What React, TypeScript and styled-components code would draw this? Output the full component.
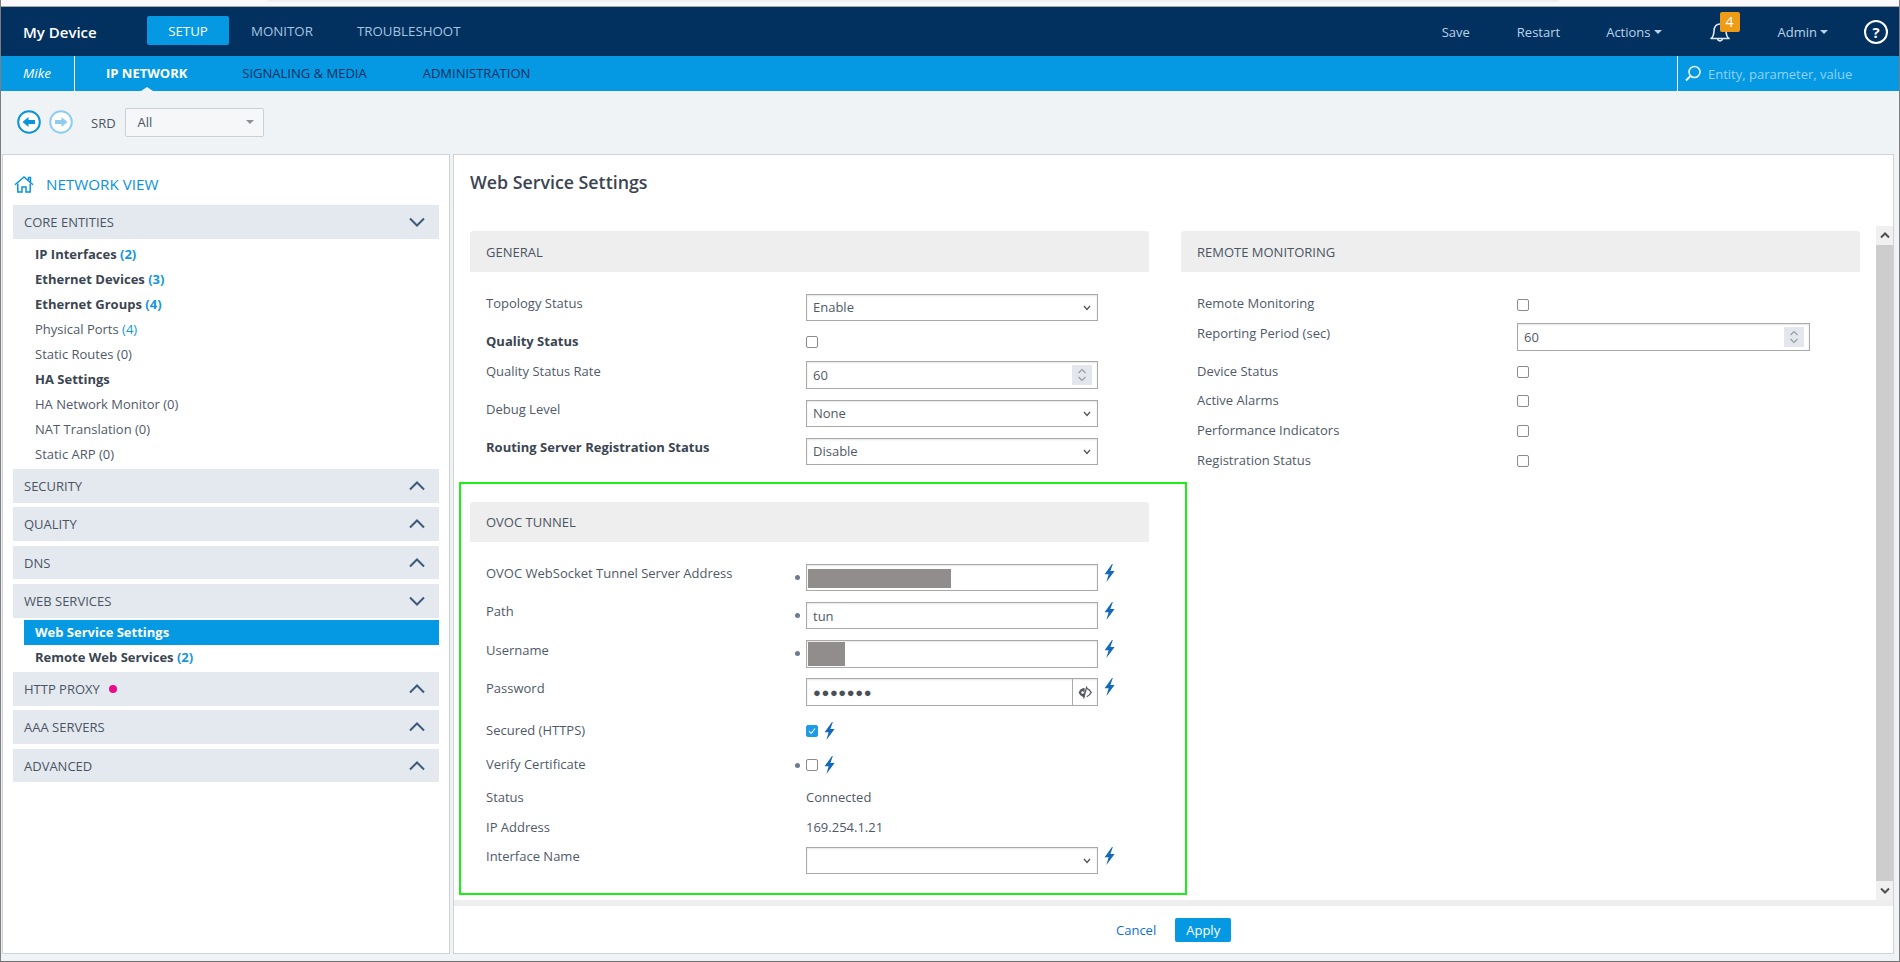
import React from 'react';
import styled, { createGlobalStyle } from 'styled-components';

const GlobalStyle = createGlobalStyle`
  html, body {
    margin: 0;
    padding: 0;
    background: #eff3f6;
    font-family: 'Open Sans', 'Liberation Sans', sans-serif;
    font-size: 13px;
    color: #4a5563;
  }
  * { box-sizing: border-box; }
`;

const Frame = styled.div`
  width: 1900px;
  height: 962px;
  overflow: hidden;
  display: flex;
  flex-direction: column;
  background: #eff3f6;
  border-left: 1px solid #7d7d7d;
  border-right: 1px solid #7d7d7d;
  border-bottom: 1px solid #6f6f6f;
`;

const BrowserStrip = styled.div`
  height: 7px;
  flex: none;
  background: #f9f9fb;
  border-bottom: 1px solid #a8a8a8;
  padding: 0 340px 0 267px;
`;

const AddressEdge = styled.div`
  height: 2px;
  background: #eeeef2;
  border-radius: 0 0 4px 4px;
`;

const Header = styled.header`
  height: 49px;
  flex: none;
  display: flex;
  align-items: center;
  background: #02305f;
  padding: 0 11px 0 22px;
`;

const Brand = styled.div`
  width: 124px;
  color: #fff;
  font-size: 15px;
  font-weight: 600;
`;

const TopTab = styled.div<{ $active?: boolean }>`
  width: ${(p) => (p.$active ? '82px' : 'auto')};
  height: 29px;
  margin-top: -2px;
  margin-right: ${(p) => (p.$active ? '22px' : '44px')};
  display: flex;
  align-items: center;
  justify-content: center;
  border-radius: 2px;
  font-size: 13.3px;
  color: ${(p) => (p.$active ? '#fff' : '#a5c6e2')};
  background: ${(p) => (p.$active ? '#0599e4' : 'transparent')};
`;

const HeaderActions = styled.div`
  margin-left: auto;
  display: flex;
  align-items: center;
  color: #b9d4ea;
  font-size: 13px;
`;

const HeaderAction = styled.div<{ $gap: number }>`
  display: flex;
  align-items: center;
  gap: 3px;
  margin-right: ${(p) => p.$gap}px;
`;

const Caret = styled.span`
  width: 0;
  height: 0;
  border-left: 4px solid transparent;
  border-right: 4px solid transparent;
  border-top: 4.5px solid currentColor;
`;

const BellWrap = styled.div`
  position: relative;
  width: 20px;
  height: 24px;
  margin-right: 48px;
  color: #dfe9f2;
`;

const Badge = styled.div`
  position: absolute;
  left: 10px;
  top: -8px;
  width: 20px;
  height: 20px;
  background: #ee9c17;
  border-radius: 2px;
  color: #fff;
  font-size: 14px;
  line-height: 20px;
  text-align: center;
`;

const HelpRound = styled.div`
  width: 24px;
  height: 24px;
  border: 2px solid #fff;
  border-radius: 50%;
  color: #fff;
  font-size: 15px;
  font-weight: 700;
  line-height: 20px;
  text-align: center;
`;

const SubNav = styled.nav`
  height: 35px;
  flex: none;
  display: flex;
  align-items: stretch;
  background: #0599e4;
`;

const UserName = styled.div`
  width: 74px;
  padding-left: 22px;
  line-height: 35px;
  color: #fff;
  font-size: 13.5px;
  font-style: italic;
  border-right: 1px solid #fff;
`;

const SubTab = styled.div<{ $active?: boolean; $gap: number }>`
  position: relative;
  margin-left: ${(p) => p.$gap}px;
  line-height: 35px;
  font-size: 13px;
  font-weight: ${(p) => (p.$active ? 700 : 400)};
  color: ${(p) => (p.$active ? '#fff' : '#02305f')};

  ${(p) =>
    p.$active &&
    `&::after {
      content: '';
      position: absolute;
      left: 50%;
      bottom: 0;
      margin-left: -6px;
      border-left: 6px solid transparent;
      border-right: 6px solid transparent;
      border-bottom: 4px solid #eff3f6;
    }`}
`;

const SearchBox = styled.div`
  margin-left: auto;
  width: 222px;
  display: flex;
  align-items: center;
  gap: 7px;
  padding-left: 7px;
  border-left: 1px solid #fff;
  color: #8fd2f7;
  font-size: 13px;
`;

const Toolbar = styled.div`
  height: 63px;
  flex: none;
  display: flex;
  align-items: center;
  padding-left: 16px;
`;

const RoundButton = styled.div`
  width: 24px;
  height: 24px;
  margin-right: 8px;
  margin-top: -1px;
`;

const ToolbarLabel = styled.div`
  margin-left: 10px;
  margin-right: 9px;
  font-size: 13px;
  color: #4a5563;
`;

const SrdSelect = styled.div`
  width: 139px;
  height: 29px;
  display: flex;
  align-items: center;
  justify-content: space-between;
  padding: 0 9px 0 12px;
  background: #f5f7f9;
  border: 1px solid #ccd0d5;
  border-radius: 2px;
  color: #8b9199;
  margin-top: -1px;
`;

const SrdValue = styled.span`
  color: #4a5563;
`;

const Workspace = styled.div`
  flex: 1;
  min-height: 0;
  display: flex;
  gap: 3px;
  padding: 0 5px 7px 1px;
`;

const SidePanel = styled.aside`
  width: 448px;
  flex: none;
  background: #fff;
  border: 1px solid #cfd3d8;
  padding: 14px 10px 0 10px;
`;

const NetworkView = styled.div`
  height: 30px;
  display: flex;
  align-items: center;
  gap: 12px;
  padding-left: 1px;
  margin-bottom: 6px;
  font-size: 15.2px;
  color: #0b93dc;
`;

const GroupBar = styled.div<{ $gap?: number; $h?: number }>`
  height: ${(p) => p.$h ?? 34}px;
  margin-top: ${(p) => p.$gap ?? 4}px;
  display: flex;
  align-items: center;
  justify-content: space-between;
  padding: 0 14px 0 11px;
  background: #e4e9f0;
  color: #4a5563;
  font-size: 13px;
`;

const GroupName = styled.span`
  display: flex;
  align-items: center;
  gap: 9px;
`;

const AlertDot = styled.span`
  width: 8px;
  height: 8px;
  border-radius: 50%;
  background: #ea0a8c;
`;

const NavList = styled.div<{ $pad: number }>`
  padding: ${(p) => p.$pad}px 0;
`;

const NavItem = styled.div<{ $bold?: boolean; $selected?: boolean }>`
  height: 25px;
  line-height: 25px;
  padding-left: ${(p) => (p.$selected ? '11px' : '22px')};
  margin-left: ${(p) => (p.$selected ? '11px' : '0')};
  font-size: 13px;
  font-weight: ${(p) => (p.$bold || p.$selected ? 700 : 400)};
  color: ${(p) => (p.$selected ? '#fff' : p.$bold ? '#3b4552' : '#4f5a68')};
  background: ${(p) => (p.$selected ? '#0599e4' : 'transparent')};
`;

const Count = styled.span`
  color: #1496df;
`;

const MainPanel = styled.main`
  flex: 1;
  min-width: 0;
  display: flex;
  flex-direction: column;
  background: #fff;
  border: 1px solid #cfd3d8;
`;

const PageTitle = styled.h1`
  height: 71px;
  flex: none;
  margin: 0;
  padding: 15px 0 0 16px;
  font-size: 17.8px;
  line-height: 24px;
  font-weight: 600;
  color: #3b4552;
`;

const ScrollArea = styled.div`
  flex: 1;
  min-height: 0;
  display: flex;
`;

const Columns = styled.div`
  flex: 1;
  display: grid;
  grid-template-columns: 679px 679px;
  column-gap: 32px;
  align-items: start;
  padding: 5px 0 0 16px;
`;

const Section = styled.section``;

const SectionBar = styled.div<{ $h: number }>`
  height: ${(p) => p.$h}px;
  display: flex;
  align-items: center;
  padding-left: 16px;
  background: #eeeeee;
  border-radius: 3px 3px 0 0;
  font-size: 13px;
  color: #4a5563;
`;

const Rows = styled.div`
  padding-top: 22px;
`;

const Row = styled.div<{ $pitch: number }>`
  height: ${(p) => p.$pitch}px;
  display: grid;
  grid-template-columns: 308px 12px 1fr;
  align-items: start;
  padding-left: 16px;
`;

const Label = styled.div<{ $bold?: boolean; $shift?: number }>`
  margin-top: ${(p) => p.$shift ?? 0}px;
  line-height: 18px;
  font-size: 13px;
  font-weight: ${(p) => (p.$bold ? 700 : 400)};
  color: ${(p) => (p.$bold ? '#3b4552' : '#4f5a68')};
`;

const MarkCell = styled.div`
  display: flex;
`;

const Mark = styled.span<{ $top: number }>`
  width: 5px;
  height: 5px;
  margin: ${(p) => p.$top}px 0 0 1px;
  border-radius: 50%;
  background: #6e7b8f;
`;

const Control = styled.div<{ $top?: number }>`
  display: flex;
  align-items: flex-start;
  gap: 6px;
  margin-top: ${(p) => p.$top ?? 0}px;
  font-size: 13px;
  color: #4f5a68;
`;

const FieldBox = styled.div<{ $h?: number; $w?: number }>`
  position: relative;
  width: ${(p) => p.$w ?? 292}px;
  height: ${(p) => p.$h ?? 27}px;
  display: flex;
  align-items: center;
  justify-content: space-between;
  padding: 0 6px;
  background: #fff;
  border: 1px solid #a9a9a9;
  box-shadow: inset 0 1px 2px rgba(0, 0, 0, 0.1);
  color: #4f5a68;
`;

const SelectValue = styled.span`
  margin-top: -2px;
`;

const Redacted = styled.div<{ $w: number; $h: number }>`
  position: absolute;
  left: 1px;
  top: ${(p) => (p.$h > 20 ? 1 : 4)}px;
  width: ${(p) => p.$w}px;
  height: ${(p) => p.$h}px;
  background: #918d8c;
`;

const Spinner = styled.div`
  width: 20px;
  height: 20px;
  margin-right: -1px;
  display: flex;
  align-items: center;
  justify-content: center;
  background: #e4e6ee;
`;

const Dots = styled.span`
  font-size: 13px;
  letter-spacing: 0.6px;
  color: #4a4f57;
`;

const EyeCell = styled.div`
  position: absolute;
  right: 0;
  top: 0;
  bottom: 0;
  width: 25px;
  display: flex;
  align-items: center;
  justify-content: center;
  border-left: 1px solid #a9a9a9;
`;

const CheckBox = styled.div<{ $on?: boolean; $top?: number }>`
  width: 12px;
  height: 12px;
  margin-top: ${(p) => p.$top ?? 0}px;
  display: flex;
  align-items: center;
  justify-content: center;
  border: 1px solid ${(p) => (p.$on ? '#1e9be6' : '#8c8c8c')};
  border-radius: 2px;
  background: ${(p) => (p.$on ? '#1e9be6' : '#fff')};
`;

const Highlight = styled.div`
  margin: 17px -38px 0 -11px;
  padding: 18px 36px 19px 9px;
  border: 2px solid #18f018;
`;

const ScrollTrack = styled.div`
  width: 17px;
  flex: none;
  display: flex;
  flex-direction: column;
  background: #f0f0f0;
`;

const ScrollArrow = styled.div`
  height: 19px;
  flex: none;
  display: flex;
  align-items: center;
  justify-content: center;
`;

const ScrollThumb = styled.div`
  flex: 1;
  background: #cdcdcd;
`;

const Footer = styled.footer`
  height: 53px;
  flex: none;
  display: flex;
  align-items: center;
  padding: 0 0 0 662px;
  background: #fff;
  border-top: 6px solid #eeeeee;
`;

const CancelLink = styled.div`
  color: #0f6fcb;
  font-size: 13px;
`;

const ApplyButton = styled.div`
  width: 56px;
  height: 24px;
  margin-left: 19px;
  display: flex;
  align-items: center;
  justify-content: center;
  border-radius: 2px;
  background: #0599e4;
  color: #fff;
  font-size: 13px;
`;

const Chevron = ({ up }: { up?: boolean }) => (
  <svg width="16" height="10" viewBox="0 0 16 10">
    <polyline
      points={up ? '1,8.5 8,1.5 15,8.5' : '1,1.5 8,8.5 15,1.5'}
      fill="none"
      stroke="#3d5a78"
      strokeWidth="2"
    />
  </svg>
);

const SelectArrow = () => (
  <svg width="8" height="6" viewBox="0 0 8 6">
    <polyline points="1,1 4,4.5 7,1" fill="none" stroke="#555" strokeWidth="1.3" />
  </svg>
);

const Bolt = () => (
  <svg width="11" height="18" viewBox="0 0 11 18">
    <path d="M8 0 L0.6 10.2 L4.6 10.2 L2.4 18 L10.6 7 L6.4 7 L8.8 0 Z" fill="#1469b9" />
  </svg>
);

const SpinButtons = () => (
  <Spinner>
    <svg width="10" height="16" viewBox="0 0 10 16">
      <polyline points="1.5,6 5,2.5 8.5,6" fill="none" stroke="#9a9ca4" strokeWidth="1.2" />
      <polyline points="1.5,10 5,13.5 8.5,10" fill="none" stroke="#9a9ca4" strokeWidth="1.2" />
    </svg>
  </Spinner>
);

const SelectField = ({ value }: { value?: string }) => (
  <FieldBox>
    <SelectValue>{value}</SelectValue>
    <SelectArrow />
  </FieldBox>
);

const TickBox = ({ on, top }: { on?: boolean; top?: number }) => (
  <CheckBox $on={on} $top={top}>
    {on && (
      <svg width="8" height="8" viewBox="0 0 8 8">
        <polyline points="1,4 3.2,6.5 7,1.5" fill="none" stroke="#fff" strokeWidth="1.1" />
      </svg>
    )}
  </CheckBox>
);

const HomeIcon = () => (
  <svg width="20" height="17" viewBox="0 0 20 17" fill="none" stroke="#0b93dc" strokeWidth="1.5">
    <path d="M1 8.8 L10 1 L19 8.8" />
    <path d="M14.5 4.5 V1.5 H16.5 V6" />
    <path d="M3.8 7.5 V16 H8 V11 H12 V16 H16.2 V7.5" />
  </svg>
);

const NavArrow = ({ color, dir }: { color: string; dir: 'left' | 'right' }) => (
  <svg width="24" height="24" viewBox="0 0 24 24">
    <circle cx="12" cy="12" r="10.8" fill="#fff" stroke={color} strokeWidth="2" />
    <path
      d={dir === 'left' ? 'M5.5 12 L11.5 7 V10 H18 V14 H11.5 V17 Z' : 'M18.5 12 L12.5 7 V10 H6 V14 H12.5 V17 Z'}
      fill={color}
    />
  </svg>
);

const BellIcon = () => (
  <svg width="20" height="24" viewBox="0 0 20 24" fill="none" stroke="currentColor" strokeWidth="1.6">
    <path d="M1 18.5 C3.5 17 3.8 14 4 11 C4.2 6.5 6.6 4 10 4 C13.4 4 15.8 6.5 16 11 C16.2 14 16.5 17 19 18.5 Z" strokeLinejoin="round" />
    <path d="M7.5 19 A2.6 2.6 0 0 0 12.5 19" />
  </svg>
);

const SearchIcon = () => (
  <svg width="16" height="17" viewBox="0 0 16 17" fill="none" stroke="#e8f6fe" strokeWidth="1.6">
    <circle cx="9.5" cy="7" r="5.5" />
    <line x1="5.5" y1="11" x2="1" y2="15.5" strokeWidth="2" />
  </svg>
);

const EyeIcon = () => (
  <svg width="14" height="13" viewBox="0 0 14 13">
    <path d="M6.6 2 C3.8 2 1.6 4 0.6 6.5 C1.6 9 3.8 11 6.6 11 Z" fill="#55585e" />
    <path d="M8.8 2.4 C10.8 3.2 12.4 5 13.2 6.5 C12.4 8 10.8 9.8 8.8 10.6" fill="none" stroke="#55585e" strokeWidth="1.4" />
    <line x1="8.8" y1="0.5" x2="5.6" y2="12.5" stroke="#55585e" strokeWidth="1.2" />
    <circle cx="4.6" cy="6.5" r="1.3" fill="#fff" />
  </svg>
);

const ScrollChevron = ({ up }: { up?: boolean }) => (
  <svg width="10" height="7" viewBox="0 0 10 7">
    <polyline
      points={up ? '1,5.5 5,1.5 9,5.5' : '1,1.5 5,5.5 9,1.5'}
      fill="none"
      stroke="#505050"
      strokeWidth="2"
    />
  </svg>
);

const coreItems = [
  { name: 'IP Interfaces', count: '(2)', bold: true, link: true },
  { name: 'Ethernet Devices', count: '(3)', bold: true, link: true },
  { name: 'Ethernet Groups', count: '(4)', bold: true, link: true },
  { name: 'Physical Ports', count: '(4)', link: true },
  { name: 'Static Routes', count: '(0)' },
  { name: 'HA Settings', bold: true },
  { name: 'HA Network Monitor', count: '(0)' },
  { name: 'NAT Translation', count: '(0)' },
  { name: 'Static ARP', count: '(0)' },
];

const App: React.FC = () => {
  return (
    <Frame>
      <GlobalStyle />
      <BrowserStrip>
        <AddressEdge />
      </BrowserStrip>

      <Header>
        <Brand>My Device</Brand>
        <TopTab $active>SETUP</TopTab>
        <TopTab>MONITOR</TopTab>
        <TopTab>TROUBLESHOOT</TopTab>
        <HeaderActions>
          <HeaderAction $gap={47}>Save</HeaderAction>
          <HeaderAction $gap={46}>Restart</HeaderAction>
          <HeaderAction $gap={48}>
            Actions
            <Caret />
          </HeaderAction>
          <BellWrap>
            <BellIcon />
            <Badge>4</Badge>
          </BellWrap>
          <HeaderAction $gap={36}>
            Admin
            <Caret />
          </HeaderAction>
          <HelpRound>?</HelpRound>
        </HeaderActions>
      </Header>

      <SubNav>
        <UserName>Mike</UserName>
        <SubTab $active $gap={31}>
          IP NETWORK
        </SubTab>
        <SubTab $gap={55}>SIGNALING &amp; MEDIA</SubTab>
        <SubTab $gap={56}>ADMINISTRATION</SubTab>
        <SearchBox>
          <SearchIcon />
          Entity, parameter, value
        </SearchBox>
      </SubNav>

      <Toolbar>
        <RoundButton>
          <NavArrow color="#0b93dc" dir="left" />
        </RoundButton>
        <RoundButton>
          <NavArrow color="#8fcdf0" dir="right" />
        </RoundButton>
        <ToolbarLabel>SRD</ToolbarLabel>
        <SrdSelect>
          <SrdValue>All</SrdValue>
          <Caret />
        </SrdSelect>
      </Toolbar>

      <Workspace>
        <SidePanel>
          <NetworkView>
            <HomeIcon />
            NETWORK VIEW
          </NetworkView>

          <GroupBar $gap={0}>
            CORE ENTITIES
            <Chevron />
          </GroupBar>
          <NavList $pad={2.5}>
            {coreItems.map((item) => (
              <NavItem key={item.name} $bold={item.bold}>
                {item.name} {item.count && (item.link ? <Count>{item.count}</Count> : item.count)}
              </NavItem>
            ))}
          </NavList>

          <GroupBar $gap={0}>
            SECURITY
            <Chevron up />
          </GroupBar>
          <GroupBar>
            QUALITY
            <Chevron up />
          </GroupBar>
          <GroupBar $gap={5} $h={33}>
            DNS
            <Chevron up />
          </GroupBar>
          <GroupBar $gap={5}>
            WEB SERVICES
            <Chevron />
          </GroupBar>
          <NavList $pad={2}>
            <NavItem $selected>Web Service Settings</NavItem>
            <NavItem $bold>
              Remote Web Services <Count>(2)</Count>
            </NavItem>
          </NavList>
          <GroupBar $gap={0}>
            <GroupName>
              HTTP PROXY
              <AlertDot />
            </GroupName>
            <Chevron up />
          </GroupBar>
          <GroupBar>
            AAA SERVERS
            <Chevron up />
          </GroupBar>
          <GroupBar $gap={5} $h={33}>
            ADVANCED
            <Chevron up />
          </GroupBar>
        </SidePanel>

        <MainPanel>
          <PageTitle>Web Service Settings</PageTitle>
          <ScrollArea>
            <Columns>
              <div>
                <Section>
                  <SectionBar $h={41}>GENERAL</SectionBar>
                  <Rows>
                    <Row $pitch={38}>
                      <Label>Topology Status</Label>
                      <MarkCell />
                      <Control>
                        <SelectField value="Enable" />
                      </Control>
                    </Row>
                    <Row $pitch={29}>
                      <Label $bold>Quality Status</Label>
                      <MarkCell />
                      <Control $top={4}>
                        <TickBox />
                      </Control>
                    </Row>
                    <Row $pitch={39}>
                      <Label $shift={1}>Quality Status Rate</Label>
                      <MarkCell />
                      <Control>
                        <FieldBox $h={28}>
                          60
                          <SpinButtons />
                        </FieldBox>
                      </Control>
                    </Row>
                    <Row $pitch={38}>
                      <Label>Debug Level</Label>
                      <MarkCell />
                      <Control>
                        <SelectField value="None" />
                      </Control>
                    </Row>
                    <Row $pitch={27}>
                      <Label $bold>Routing Server Registration Status</Label>
                      <MarkCell />
                      <Control>
                        <SelectField value="Disable" />
                      </Control>
                    </Row>
                  </Rows>
                </Section>

                <Highlight>
                  <Section>
                    <SectionBar $h={40}>OVOC TUNNEL</SectionBar>
                    <Rows>
                      <Row $pitch={38}>
                        <Label>OVOC WebSocket Tunnel Server Address</Label>
                        <MarkCell>
                          <Mark $top={11} />
                        </MarkCell>
                        <Control>
                          <FieldBox>
                            <Redacted $w={143} $h={19} />
                          </FieldBox>
                          <Bolt />
                        </Control>
                      </Row>
                      <Row $pitch={38}>
                        <Label>Path</Label>
                        <MarkCell>
                          <Mark $top={11} />
                        </MarkCell>
                        <Control>
                          <FieldBox>tun</FieldBox>
                          <Bolt />
                        </Control>
                      </Row>
                      <Row $pitch={38}>
                        <Label $shift={1}>Username</Label>
                        <MarkCell>
                          <Mark $top={11} />
                        </MarkCell>
                        <Control>
                          <FieldBox $h={28}>
                            <Redacted $w={37} $h={24} />
                          </FieldBox>
                          <Bolt />
                        </Control>
                      </Row>
                      <Row $pitch={43}>
                        <Label $shift={1}>Password</Label>
                        <MarkCell />
                        <Control>
                          <FieldBox $h={28}>
                            <Dots>●●●●●●●</Dots>
                            <EyeCell>
                              <EyeIcon />
                            </EyeCell>
                          </FieldBox>
                          <Bolt />
                        </Control>
                      </Row>
                      <Row $pitch={34}>
                        <Label>Secured (HTTPS)</Label>
                        <MarkCell />
                        <Control $top={1}>
                          <TickBox on top={3} />
                          <Bolt />
                        </Control>
                      </Row>
                      <Row $pitch={33}>
                        <Label>Verify Certificate</Label>
                        <MarkCell>
                          <Mark $top={8} />
                        </MarkCell>
                        <Control $top={1}>
                          <TickBox top={3} />
                          <Bolt />
                        </Control>
                      </Row>
                      <Row $pitch={30}>
                        <Label>Status</Label>
                        <MarkCell />
                        <Control>Connected</Control>
                      </Row>
                      <Row $pitch={29}>
                        <Label>IP Address</Label>
                        <MarkCell />
                        <Control>169.254.1.21</Control>
                      </Row>
                      <Row $pitch={27}>
                        <Label>Interface Name</Label>
                        <MarkCell />
                        <Control>
                          <SelectField />
                          <Bolt />
                        </Control>
                      </Row>
                    </Rows>
                  </Section>
                </Highlight>
              </div>

              <Section>
                <SectionBar $h={41}>REMOTE MONITORING</SectionBar>
                <Rows>
                  <Row $pitch={29}>
                    <Label>Remote Monitoring</Label>
                    <MarkCell />
                    <Control $top={5}>
                      <TickBox />
                    </Control>
                  </Row>
                  <Row $pitch={39}>
                    <Label $shift={1}>Reporting Period (sec)</Label>
                    <MarkCell />
                    <Control>
                      <FieldBox $h={28} $w={293}>
                        60
                        <SpinButtons />
                      </FieldBox>
                    </Control>
                  </Row>
                  <Row $pitch={29}>
                    <Label>Device Status</Label>
                    <MarkCell />
                    <Control $top={4}>
                      <TickBox />
                    </Control>
                  </Row>
                  <Row $pitch={30}>
                    <Label>Active Alarms</Label>
                    <MarkCell />
                    <Control $top={4}>
                      <TickBox />
                    </Control>
                  </Row>
                  <Row $pitch={30}>
                    <Label>Performance Indicators</Label>
                    <MarkCell />
                    <Control $top={4}>
                      <TickBox />
                    </Control>
                  </Row>
                  <Row $pitch={30}>
                    <Label>Registration Status</Label>
                    <MarkCell />
                    <Control $top={4}>
                      <TickBox />
                    </Control>
                  </Row>
                </Rows>
              </Section>
            </Columns>
            <ScrollTrack>
              <ScrollArrow>
                <ScrollChevron up />
              </ScrollArrow>
              <ScrollThumb />
              <ScrollArrow>
                <ScrollChevron />
              </ScrollArrow>
            </ScrollTrack>
          </ScrollArea>
          <Footer>
            <CancelLink>Cancel</CancelLink>
            <ApplyButton>Apply</ApplyButton>
          </Footer>
        </MainPanel>
      </Workspace>
    </Frame>
  );
};

export default App;
